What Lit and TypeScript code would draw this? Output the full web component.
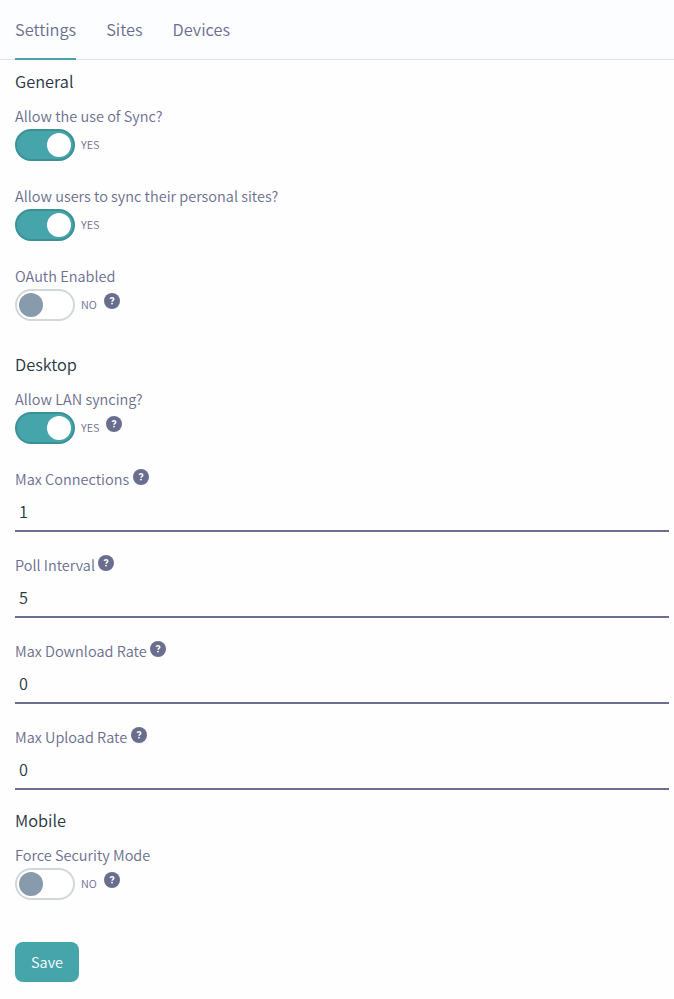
import { LitElement, html, css, nothing } from "lit";
import { customElement, property } from "lit/decorators.js";

@customElement("help-icon")
export class HelpIcon extends LitElement {
  static styles = css`
    :host {
      display: block;
      flex: none;
      width: 16px;
      height: 16px;
    }
    .icon {
      display: block;
      width: 16px;
      height: 16px;
    }
  `;
  render() {
    return html`<svg class="icon" viewBox="0 0 16 16" role="img" aria-label="Help">
      <circle cx="8" cy="8" r="8" fill="#6a6e8e"></circle>
      <path d="M6.2 5.9C6.4 5 7 4.7 8 4.7C9.1 4.7 9.8 5.2 9.8 6.1C9.8 7.3 8 7.3 8 8.7" fill="none" stroke="#fff" stroke-width="1.5"></path>
      <circle cx="8" cy="10.6" r="0.95" fill="#fff"></circle>
    </svg>`;
  }
}

@customElement("toggle-field")
export class ToggleField extends LitElement {
  @property() label = "";
  @property({ type: Boolean }) on = false;
  @property({ type: Boolean }) help = false;

  static styles = css`
    :host {
      display: block;
    }
    .label {
      height: 24px;
      line-height: 22px;
      white-space: nowrap;
    }
    .row {
      display: flex;
      height: 32px;
    }
    .switch {
      box-sizing: border-box;
      display: flex;
      align-items: center;
      width: 60px;
      height: 32px;
      padding: 0 2px;
      border: 2px solid #d2d7da;
      border-radius: 16px;
      background: #fff;
    }
    .knob {
      width: 24px;
      height: 24px;
      border-radius: 50%;
      background: #879bac;
    }
    .switch.on {
      justify-content: flex-end;
      border-color: #3b9196;
      background: #45a5ab;
    }
    .switch.on .knob {
      background: #fff;
    }
    .state {
      width: 17px;
      margin-left: 6px;
      font-size: 10.9px;
      line-height: 30px;
    }
    .state.on {
      width: 19px;
    }
    help-icon {
      margin: 4px 0 0 6px;
    }
  `;
  render() {
    const on = this.on ? "on" : "";
    return html`
      <div class="label">${this.label}</div>
      <div class="row">
        <div class="switch ${on}"><div class="knob"></div></div>
        <span class="state ${on}">${this.on ? "YES" : "NO"}</span>
        ${this.help ? html`<help-icon></help-icon>` : nothing}
      </div>
    `;
  }
}

@customElement("number-field")
export class NumberField extends LitElement {
  @property() label = "";
  @property() value = "";

  static styles = css`
    :host {
      display: block;
    }
    .label {
      display: flex;
      gap: 3.4px;
      height: 24px;
      line-height: 22px;
      white-space: nowrap;
    }
    help-icon {
      margin-top: 1px;
    }
    .input {
      display: block;
      box-sizing: border-box;
      width: 100%;
      height: 40px;
      margin: 0;
      padding: 0 4px;
      border: 0;
      border-bottom: 2px solid #6a6e8e;
      border-radius: 0;
      outline: 0;
      background: transparent;
      color: #263640;
      font-family: inherit;
      font-size: 16.3px;
      font-weight: inherit;
    }
  `;
  render() {
    return html`
      <div class="label"><span>${this.label}</span><help-icon></help-icon></div>
      <input class="input" aria-label=${this.label} .value=${this.value} />
    `;
  }
}

@customElement("app-root")
export class AppRoot extends LitElement {
  static styles = css`
    :host {
      display: block;
      min-height: 999px;
      background: #fefefe;
      color: #6a6e8e;
      font-family: "Source Sans Pro", "Noto Sans CJK SC", "Noto Sans", sans-serif;
      font-size: 14.5px;
      font-weight: 350;
    }
    .tabs {
      box-sizing: border-box;
      display: flex;
      gap: 30px;
      height: 60px;
      padding: 0 15px;
      border-bottom: 1px solid #dfe3e8;
      background: #fcfdfe;
    }
    .tab {
      box-sizing: border-box;
      height: 60px;
      line-height: 58px;
      font-size: 16.35px;
    }
    .tab.active {
      border-bottom: 2px solid #45a5ab;
    }
    .form {
      padding: 10px 5px 0 15px;
    }
    .section {
      display: flex;
      flex-direction: column;
      gap: 24px;
      margin-bottom: 32px;
    }
    .heading {
      height: 24px;
      margin: 0 0 -13px;
      color: #263640;
      font-size: 16.35px;
      font-weight: inherit;
      line-height: 22px;
    }
    .section.desktop {
      margin-bottom: 19px;
    }
    .numbers {
      display: flex;
      flex-direction: column;
      gap: 22px;
    }
    .save {
      display: block;
      box-sizing: border-box;
      width: 64px;
      height: 40px;
      margin-top: 42px;
      padding: 0;
      border: 0;
      border-radius: 8px;
      background: #45a5ab;
      color: #fff;
      font-family: inherit;
      font-size: 14.5px;
      font-weight: inherit;
      line-height: 40px;
    }
  `;
  render() {
    return html`
      <nav class="tabs">
        <div class="tab active">Settings</div>
        <div class="tab">Sites</div>
        <div class="tab">Devices</div>
      </nav>
      <div class="form">
        <section class="section">
          <h2 class="heading">General</h2>
          <toggle-field label="Allow the use of Sync?" on></toggle-field>
          <toggle-field label="Allow users to sync their personal sites?" on></toggle-field>
          <toggle-field label="OAuth Enabled" help></toggle-field>
        </section>
        <section class="section desktop">
          <h2 class="heading">Desktop</h2>
          <toggle-field label="Allow LAN syncing?" on help></toggle-field>
          <div class="numbers">
            <number-field label="Max Connections" value="1"></number-field>
            <number-field label="Poll Interval" value="5"></number-field>
            <number-field label="Max Download Rate" value="0"></number-field>
            <number-field label="Max Upload Rate" value="0"></number-field>
          </div>
        </section>
        <section class="section">
          <h2 class="heading">Mobile</h2>
          <toggle-field label="Force Security Mode" help></toggle-field>
        </section>
        <button class="save">Save</button>
      </div>
    `;
  }
}
